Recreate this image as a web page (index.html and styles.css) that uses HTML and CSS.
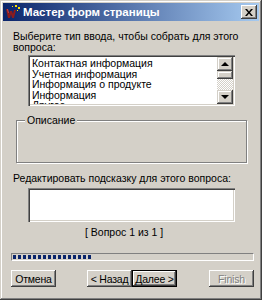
FILE: index.html
```html
<!DOCTYPE html>
<html lang="ru">

<head>
    <meta charset="UTF-8">
    <meta name="viewport" content="width=device-width, initial-scale=1.0">
    <title>Мастер форм страницы</title>
    <link rel="stylesheet" href="styles.css">
</head>

<body>
    <div class="window">
        <div class="titlebar">
            <svg class="app-icon" width="16" height="16" viewBox="0 0 16 16">
                <path d="M1 5 L3 14 L5 14 L6 10 L7 14 L9 14 L11 6 L9 6 L8 10 L7 7 L5 7 L4 10 L3 5 Z" fill="#8c1c1c" />
                <path d="M2 5 L3 5 L4 9 L3 9 Z" fill="#d04040" />
                <rect x="10" y="1" width="2" height="2" fill="#ffe000" />
                <rect x="13" y="3" width="2" height="2" fill="#ffe000" />
                <rect x="7" y="2" width="1" height="1" fill="#ffe000" />
                <rect x="12" y="6" width="1" height="1" fill="#ffe000" />
            </svg>
            <span class="title">Мастер форм страницы</span>
            <div class="close">
                <svg width="8" height="7" viewBox="0 0 8 7">
                    <path d="M0 0h2l2 2.5L6 0h2L5 3.5 8 7H6L4 4.5 2 7H0l3-3.5z" fill="#000" />
                </svg>
            </div>
        </div>

        <div class="content">
            <p class="prompt">Выберите тип ввода, чтобы собрать для этого<br>вопроса:</p>

            <div class="listbox">
                <ul class="items">
                    <li>Контактная информация</li>
                    <li>Учетная информация</li>
                    <li>Информация о продукте</li>
                    <li>Информация</li>
                    <li>Другое</li>
                </ul>
                <div class="scrollbar">
                    <div class="sb-btn"><span class="arrow-up"></span></div>
                    <div class="sb-thumb"></div>
                    <div class="sb-track"></div>
                    <div class="sb-btn"><span class="arrow-down"></span></div>
                </div>
            </div>

            <div class="group">
                <span class="legend">Описание</span>
            </div>

            <p class="prompt second">Редактировать подсказку для этого вопроса:</p>
            <div class="textbox"></div>

            <div class="counter">[ Вопрос 1 из 1 ]</div>

            <div class="progress">
                <div class="fill"></div>
            </div>

            <div class="buttons">
                <div class="btn">Отмена</div>
                <div class="btn back">&lt; Назад</div>
                <div class="btn default">Далее &gt;</div>
                <div class="btn disabled finish">Finish</div>
            </div>
        </div>
    </div>
</body>

</html>
```

FILE: styles.css
```css
body {
    margin: 0;
    font-family: "Liberation Sans", Arial, sans-serif;
    font-size: 10.5px;
    color: #000;
}

.window {
    width: 262px;
    height: 300px;
    box-sizing: border-box;
    padding: 3px;
    background: #d4d0c8;
    box-shadow: inset -1px -1px #404040, inset 1px 1px #d4d0c8, inset -2px -2px #808080, inset 2px 2px #fff;
    display: flex;
    flex-direction: column;
}

.titlebar {
    height: 18px;
    display: flex;
    align-items: center;
    background: linear-gradient(90deg, #0a246a, #a6caf0);
}

.app-icon {
    margin-left: 2px;
}

.title {
    margin-left: 2px;
    color: #fff;
    font-weight: bold;
    font-size: 11.5px;
}

.close {
    margin-left: auto;
    margin-right: 2px;
    width: 16px;
    height: 14px;
    display: flex;
    align-items: center;
    justify-content: center;
    background: #d4d0c8;
    box-shadow: inset -1px -1px #404040, inset 1px 1px #fff, inset -2px -2px #808080;
}

.content {
    flex: 1;
    display: flex;
    flex-direction: column;
    align-items: flex-start;
}

.prompt {
    margin: 10px 0 0 10px;
    line-height: 11px;
    white-space: nowrap;
}

.prompt.second {
    margin-top: 10px;
}

.listbox {
    margin: 2px 0 0 25px;
    width: 207px;
    height: 51px;
    box-sizing: border-box;
    display: flex;
    background: #fff;
    box-shadow: inset 1px 1px #808080, inset 2px 2px #404040, inset -1px -1px #fff, inset -2px -2px #d4d0c8;
    padding: 2px;
    overflow: hidden;
}

.items {
    flex: 1;
    list-style: none;
    margin: 0;
    padding: 1px 0 0 2px;
    line-height: 10.5px;
    overflow: hidden;
}

.scrollbar {
    width: 16px;
    display: flex;
    flex-direction: column;
}

.sb-btn {
    height: 14px;
    display: flex;
    align-items: center;
    justify-content: center;
    background: #d4d0c8;
    box-shadow: inset -1px -1px #404040, inset 1px 1px #d4d0c8, inset -2px -2px #808080, inset 2px 2px #fff;
}

.sb-thumb {
    height: 8px;
    background: #d4d0c8;
    box-shadow: inset -1px -1px #404040, inset 1px 1px #d4d0c8, inset -2px -2px #808080, inset 2px 2px #fff;
}

.sb-track {
    flex: 1;
    background-color: #fff;
    background-image: repeating-conic-gradient(#d4d0c8 0 25%, #fff 0 50%);
    background-size: 2px 2px;
}

.arrow-up,
.arrow-down {
    width: 0;
    height: 0;
    border-left: 4px solid transparent;
    border-right: 4px solid transparent;
}

.arrow-up {
    border-bottom: 4px solid #000;
}

.arrow-down {
    border-top: 4px solid #000;
}

.group {
    position: relative;
    margin: 14px 0 0 13px;
    width: 231px;
    height: 43px;
    box-sizing: border-box;
    border: 1px solid #808080;
    box-shadow: inset 1px 1px #fff, 1px 1px #fff;
}

.legend {
    position: absolute;
    top: -7px;
    left: 8px;
    padding: 0 2px;
    line-height: 12px;
    background: #d4d0c8;
}

.textbox {
    margin: 4px 0 0 25px;
    width: 207px;
    height: 34px;
    box-sizing: border-box;
    background: #fff;
    box-shadow: inset 1px 1px #808080, inset 2px 2px #404040, inset -1px -1px #fff, inset -2px -2px #d4d0c8;
}

.counter {
    margin: 5px 0 0 82px;
    line-height: 11px;
}

.progress {
    margin: 15px 0 0 8px;
    width: 243px;
    height: 8px;
    box-sizing: border-box;
    padding: 1px;
    border: 1px solid;
    border-color: #808080 #fff #fff #808080;
}

.fill {
    width: 80px;
    height: 100%;
    background: repeating-linear-gradient(90deg, #0a246a 0 3px, transparent 3px 5px);
}

.buttons {
    margin: 9px 0 0 8px;
    width: 243px;
    display: flex;
}

.btn {
    width: 45px;
    height: 17px;
    box-sizing: border-box;
    display: flex;
    align-items: center;
    justify-content: center;
    white-space: nowrap;
    letter-spacing: -0.2px;
    background: #d4d0c8;
    box-shadow: inset -1px -1px #404040, inset 1px 1px #fff, inset -2px -2px #808080;
}

.btn.back {
    margin-left: 31px;
}

.btn.default {
    box-shadow: inset 0 0 0 1px #000, inset -2px -2px #404040, inset 2px 2px #fff, inset -3px -3px #808080;
}

.btn.finish {
    margin-left: auto;
}

.btn.disabled {
    color: #808080;
    text-shadow: 1px 1px #fff;
}
```
